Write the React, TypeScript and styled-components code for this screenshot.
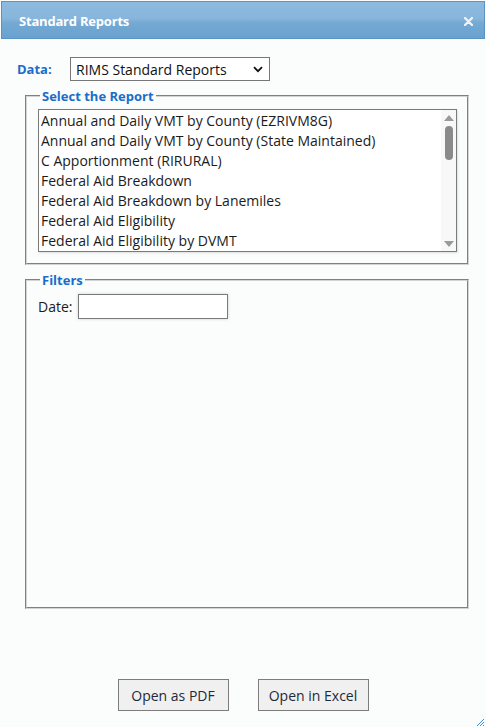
import React from 'react';
import styled, { createGlobalStyle } from 'styled-components';

const GlobalStyle = createGlobalStyle`
  html, body {
    margin: 0;
    padding: 0;
    background: #fbfcfc;
  }
  body {
    font-family: "Open Sans", "Noto Sans", "Liberation Sans", sans-serif;
    color: #1b1b1b;
  }
`;

const Dialog = styled.div`
  position: relative;
  margin: 1px 1px 0 1px;
  height: 726px;
  display: flex;
  flex-direction: column;
  background: #fbfcfc;
`;

const TitleBar = styled.div`
  height: 38px;
  box-sizing: border-box;
  border: 1px solid #5a93c6;
  background: linear-gradient(180deg, #8dbade 0%, #88b5db 45%, #74a9d4 58%, #6aa1cf 100%);
  display: flex;
  align-items: center;
  justify-content: space-between;
  padding: 2px 11px 0 17px;
`;

const Title = styled.span`
  color: #fff;
  font-weight: 700;
  font-size: 13px;
  letter-spacing: -0.2px;
`;

const CloseBtn = styled.span`
  display: flex;
  color: #e8f1f9;
`;

const Body = styled.div`
  flex: 1;
  display: flex;
  flex-direction: column;
  padding: 18px 16px 0 16px;
`;

const DataRow = styled.div`
  display: flex;
  align-items: center;
`;

const BlueLabel = styled.span`
  color: #1a6dc8;
  font-weight: 700;
  font-size: 13px;
  width: 53px;
`;

const FakeSelect = styled.div`
  width: 200px;
  height: 24px;
  box-sizing: border-box;
  border: 1px solid #767676;
  background: #fff;
  display: flex;
  align-items: center;
  justify-content: space-between;
  padding: 0 6px 0 5px;
  font-size: 14px;
  color: #111;
`;

const Fieldset = styled.fieldset<{ $height: number }>`
  margin: 6px 0 0 8px;
  padding: 4px 10px 10px 11px;
  border: 2px groove #d4d4d4;
  height: ${p => p.$height}px;
  box-sizing: border-box;
  min-width: 0;
`;

const Legend = styled.legend`
  color: #1a6dc8;
  font-weight: 700;
  font-size: 13px;
  padding: 0 2px;
  margin-left: 2px;
`;

const ListBox = styled.div`
  height: 143px;
  box-sizing: border-box;
  border: 1px solid #7a7a7a;
  background: #fff;
  box-shadow: 1px 1px 2px rgba(0, 0, 0, 0.12);
  display: flex;
  overflow: hidden;
`;

const Items = styled.div`
  flex: 1;
  padding: 1px 0 0 2px;
  overflow: hidden;
`;

const Item = styled.div`
  height: 20px;
  line-height: 20px;
  font-size: 14px;
  white-space: nowrap;
  color: #1b1b1b;
`;

const ScrollTrack = styled.div`
  width: 15px;
  background: #f8f8f8;
  display: flex;
  flex-direction: column;
  align-items: center;
  padding: 5px 0 4px;
  box-sizing: border-box;
`;

const Arrow = styled.div<{ $up?: boolean }>`
  width: 0;
  height: 0;
  border-left: 5px solid transparent;
  border-right: 5px solid transparent;
  ${p => (p.$up ? 'border-bottom: 6px solid #9a9a9a;' : 'border-top: 6px solid #9a9a9a;')}
`;

const Thumb = styled.div`
  width: 8px;
  height: 34px;
  margin-top: 5px;
  border-radius: 4px;
  background: #8a8a8a;
`;

const Spacer = styled.div`
  flex: 1;
`;

const FilterRow = styled.div`
  display: flex;
  align-items: center;
  gap: 6px;
  margin-top: 1px;
  font-size: 14px;
`;

const TextInput = styled.input`
  width: 150px;
  height: 25px;
  box-sizing: border-box;
  border: 1px solid #7a7a7a;
  background: #fff;
  box-shadow: 0 0 3px rgba(0, 0, 0, 0.18);
  outline: none;
  padding: 0 4px;
  font-family: inherit;
`;

const ButtonBar = styled.div`
  display: flex;
  justify-content: center;
  gap: 29px;
  margin-top: 70px;
`;

const Button = styled.button`
  width: 111px;
  height: 32px;
  box-sizing: border-box;
  border: 1px solid #7c7c7c;
  background: #f0f0f0;
  color: #1e2a3a;
  font-family: inherit;
  font-size: 14px;
  padding: 0;
`;

const Grip = styled.svg`
  position: absolute;
  right: 0;
  bottom: 0;
`;

const reports = [
  'Annual and Daily VMT by County (EZRIVM8G)',
  'Annual and Daily VMT by County (State Maintained)',
  'C Apportionment (RIRURAL)',
  'Federal Aid Breakdown',
  'Federal Aid Breakdown by Lanemiles',
  'Federal Aid Eligibility',
  'Federal Aid Eligibility by DVMT',
];

export default function App() {
  return (
    <>
      <GlobalStyle />
      <Dialog>
        <TitleBar>
          <Title>Standard Reports</Title>
          <CloseBtn>
            <svg width="9" height="9" viewBox="0 0 9 9">
              <path d="M1 1L8 8M8 1L1 8" stroke="#eaf2fa" strokeWidth="2.4" strokeLinecap="round" />
            </svg>
          </CloseBtn>
        </TitleBar>
        <Body>
          <DataRow>
            <BlueLabel>Data:</BlueLabel>
            <FakeSelect>
              <span>RIMS Standard Reports</span>
              <svg width="10" height="7" viewBox="0 0 10 7">
                <path d="M1 1.2L5 5.2L9 1.2" fill="none" stroke="#111" strokeWidth="1.8" />
              </svg>
            </FakeSelect>
          </DataRow>
          <Fieldset $height={178}>
            <Legend>Select the Report</Legend>
            <ListBox>
              <Items>
                {reports.map(r => (
                  <Item key={r}>{r}</Item>
                ))}
              </Items>
              <ScrollTrack>
                <Arrow $up />
                <Thumb />
                <Spacer />
                <Arrow />
              </ScrollTrack>
            </ListBox>
          </Fieldset>
          <Fieldset $height={338}>
            <Legend>Filters</Legend>
            <FilterRow>
              <span>Date:</span>
              <TextInput type="text" />
            </FilterRow>
          </Fieldset>
          <ButtonBar>
            <Button>Open as PDF</Button>
            <Button>Open in Excel</Button>
          </ButtonBar>
        </Body>
        <Grip width="11" height="11" viewBox="0 0 11 11">
          <path d="M10 3L3 10M10 6L6 10M10 9L9 10" stroke="#3d8ee6" strokeWidth="1" />
        </Grip>
      </Dialog>
    </>
  );
}
